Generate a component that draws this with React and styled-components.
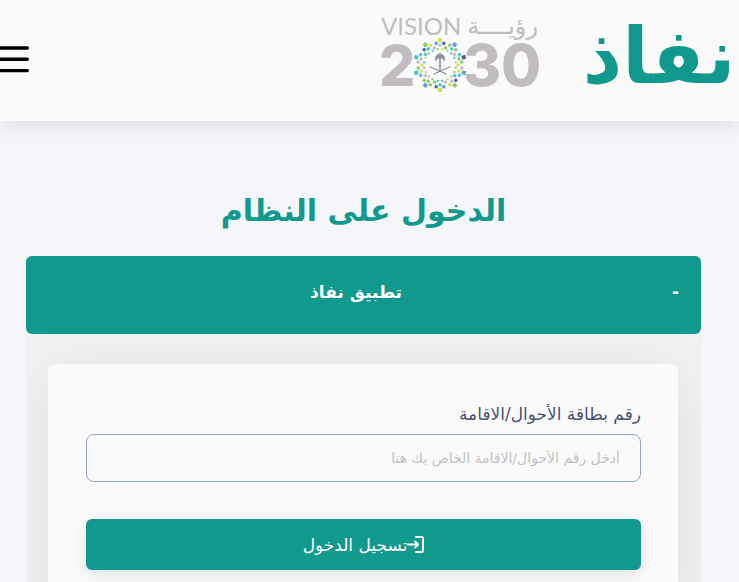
import React, { useState } from 'react';
import styled, { createGlobalStyle } from 'styled-components';

const teal = '#12998d';
const arabic = "'DejaVu Sans', sans-serif";

const GlobalStyle = createGlobalStyle`
  * {
    box-sizing: border-box;
  }
  body {
    margin: 0;
    background: #f4f6fa;
    font-family: ${arabic};
    scrollbar-width: none;
  }
`;

const Header = styled.header`
  display: flex;
  align-items: center;
  gap: 44px;
  height: 121px;
  padding-right: 8px;
  background: #fafafa;
  box-shadow: 0 4px 20px rgba(0, 0, 0, 0.1);
`;

const LogoLink = styled.a`
  display: block;
  height: 104px;
  text-decoration: none;

  svg {
    display: block;
    overflow: visible;
  }
`;

const MenuButton = styled.button`
  margin: 0 auto 4px 0;
  padding: 0;
  border: 0;
  background: none;
  color: #000;

  svg {
    display: block;
  }
`;

const Main = styled.main`
  padding: 66px 38px 0 26px;
`;

const Title = styled.h1`
  margin: 0;
  color: ${teal};
  font-size: 30px;
  line-height: 48px;
  font-weight: 700;
  text-align: center;
`;

const Panel = styled.section`
  margin-top: 21px;
  background: #f1f1f1;
  overflow: hidden;
`;

const PanelHeader = styled.button`
  display: flex;
  align-items: center;
  width: 100%;
  height: 78px;
  padding: 0 22px 6px;
  border: 0;
  border-radius: 6px;
  background: ${teal};
  color: #fff;
  font-family: ${arabic};
  font-size: 17px;
  font-weight: 700;
`;

const PanelTitle = styled.span`
  flex: 1;
  padding-right: 8px;
`;

const Card = styled.form`
  margin: 30px 23px 0 22px;
  padding: 38px 37px 38px 38px;
  border-radius: 6px 6px 0 0;
  background: #fafafa;
  box-shadow: 0 8px 60px rgba(0, 0, 0, 0.08);
`;

const Label = styled.label`
  display: block;
  color: #4a5170;
  font-size: 17px;
  line-height: 24px;
`;

const Input = styled.input`
  display: block;
  width: 100%;
  height: 48px;
  margin-top: 8px;
  padding: 0 20px;
  border: 1px solid #94a3c4;
  border-radius: 8px;
  background: #fafafa;
  color: #4a5170;
  font-family: ${arabic};
  font-size: 14px;

  &::placeholder {
    color: #c2c2c2;
    opacity: 1;
  }
`;

const SubmitButton = styled.button`
  display: flex;
  align-items: center;
  justify-content: center;
  width: 100%;
  height: 51px;
  margin-top: 37px;
  border: 0;
  border-radius: 6px;
  background: ${teal};
  box-shadow: 0 4px 14px rgba(0, 0, 0, 0.1);
  color: #fff;
  font-family: ${arabic};
  font-size: 17px;
`;

const NafathLogo = () => (
  <svg width="145" height="104" viewBox="0 0 145 104" fill={teal}>
    <text x="73" y="74" fontFamily="DejaVu Sans" fontWeight="700" fontSize="77" textAnchor="middle" direction="rtl">نفاذ</text>
  </svg>
);

// ring of dots: radius, size, angle offset from the tip, colours
const dotRings = [
  [25, 4, 0, ['#d3df4f', '#5f9fd8', '#4f5f9f', '#5f9fd8', '#8ccb6a', '#d3df4f', '#5f9fd8', '#45c4d0', '#45c4d0', '#8ccb6a']],
  [22, 3, -10, ['#5f9fd8', '#8ccb6a', '#45c4d0', '#c2bdc1', '#4f5f9f']],
  [22, 3, 10, ['#4f5f9f', '#8ccb6a', '#8ccb6a', '#45c4d0', '#d3df4f']],
  [18, 3, 18, ['#8ccb6a', '#c2bdc1', '#d3df4f', '#45c4d0', '#c2bdc1']],
  [20, 3, 0, ['#c2bdc1', '#45c4d0', '#8ccb6a', '#d3df4f']],
  [16, 2, -8, ['#8ccb6a', '#c2bdc1', '#45c4d0']],
  [16, 2, 8, ['#d3df4f', '#45c4d0', '#c2bdc1', '#8ccb6a']],
];

const Emblem = () => (
  <g transform="translate(59 56)">
    {dotRings.map(([radius, size, offset, colors], ring) =>
      Array.from({ length: 10 }, (_, i) => (
        <rect
          key={`${ring}-${i}`}
          x={-size / 2}
          y={-radius - size / 2}
          width={size}
          height={size}
          fill={colors[i % colors.length]}
          transform={`rotate(${i * 36 + offset})`}
        />
      ))
    )}
    <g fill="none" stroke="#8a9199" strokeLinecap="round">
      <path d="M0 -6V4" strokeWidth="1.6" />
      <path d="M0 -8Q-4 -12 -4 -5M0 -8Q4 -12 4 -5M0 -8Q-5 -9 -3 -7M0 -8Q5 -9 3 -7M-1 -7V-11M1 -7V-11" strokeWidth="1.8" />
      <path d="M-10 2Q-4 4 6 9M10 2Q4 4 -6 9" strokeWidth="1.3" />
    </g>
  </g>
);

const VisionLogo = () => (
  <svg width="161" height="104" viewBox="0 0 161 104" fill="#c1bcc0" direction="ltr">
    <text x="0" y="26" fontFamily="Lato" fontWeight="400" fontSize="24">VISION</text>
    <text x="157" y="25" fontFamily="DejaVu Sans" fontWeight="400" fontSize="24" direction="rtl">رؤيــــة</text>
    <text x="-2" y="77" fontFamily="Inter" fontWeight="800" fontSize="57">2</text>
    <text x="82" y="77" fontFamily="Inter" fontWeight="800" fontSize="58">30</text>
    <Emblem />
  </svg>
);

const MenuIcon = () => (
  <svg width="29" height="28" viewBox="0 0 29 28" stroke="currentColor" strokeWidth="3.4" strokeLinecap="round">
    <path d="M-2 3H27.3M-2 14.3H27.3M-2 25.6H27.3" />
  </svg>
);

const LoginIcon = () => (
  <svg width="17" height="17" viewBox="0 0 17 17" fill="none" stroke="currentColor" strokeWidth="1.8" strokeLinecap="round" strokeLinejoin="round">
    <path d="M9 1H15Q16 1 16 2V15Q16 16 15 16H9" />
    <path d="M1 8.5H11M8 5.3L11.2 8.5L8 11.7" />
  </svg>
);

const App = () => {
  const [open, setOpen] = useState(true);

  return (
    <div dir="rtl" lang="ar">
      <GlobalStyle />
      <Header>
        <LogoLink href="#" aria-label="نفاذ">
          <NafathLogo />
        </LogoLink>
        <LogoLink href="#" aria-label="رؤية 2030">
          <VisionLogo />
        </LogoLink>
        <MenuButton type="button" aria-label="القائمة">
          <MenuIcon />
        </MenuButton>
      </Header>
      <Main>
        <Title>الدخول على النظام</Title>
        <Panel>
          <PanelHeader type="button" aria-expanded={open} onClick={() => setOpen(!open)}>
            <span>{open ? '-' : '+'}</span>
            <PanelTitle>تطبيق نفاذ</PanelTitle>
          </PanelHeader>
          {open && (
            <Card onSubmit={(e) => e.preventDefault()}>
              <Label htmlFor="national-id">رقم بطاقة الأحوال/الاقامة</Label>
              <Input id="national-id" type="text" inputMode="numeric" placeholder="أدخل رقم الأحوال/الاقامة الخاص بك هنا" />
              <SubmitButton type="submit">
                <LoginIcon />
                <span>تسجيل الدخول</span>
              </SubmitButton>
            </Card>
          )}
        </Panel>
      </Main>
    </div>
  );
};

export default App;
